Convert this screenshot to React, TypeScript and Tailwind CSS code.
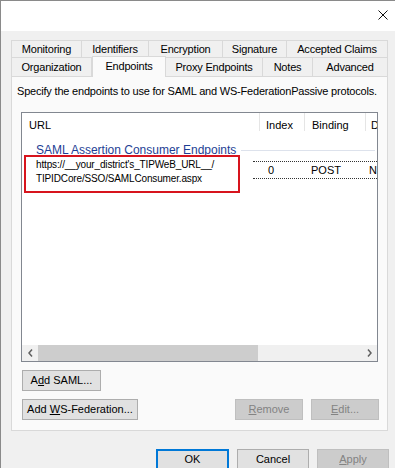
const TOP_TABS = [
  { label: "Monitoring", w: "w-[71px]" },
  { label: "Identifiers", w: "w-[67px]" },
  { label: "Encryption", w: "w-[74px]" },
  { label: "Signature", w: "w-[64px]" },
  { label: "Accepted Claims", w: "w-[101px]" },
];

const BOTTOM_TABS = [
  { label: "Organization", w: "w-[81px]" },
  { label: "Endpoints", w: "w-[74px]", active: true },
  { label: "Proxy Endpoints", w: "w-[97px]" },
  { label: "Notes", w: "w-[50px]" },
  { label: "Advanced", w: "w-[75px]" },
];

function Btn({
  children,
  w,
  disabled,
  primary,
}: {
  children: React.ReactNode;
  w: string;
  disabled?: boolean;
  primary?: boolean;
}) {
  return (
    <div
      className={
        "flex h-[21px] items-center justify-center text-[11px] " +
        w +
        (disabled
          ? " border border-[#bfbfbf] bg-[#cccccc] text-[#838383]"
          : primary
            ? " border-2 border-[#0078d7] bg-[#e1e1e1] text-black"
            : " border border-[#adadad] bg-[#e1e1e1] text-black")
      }
    >
      <span className="whitespace-pre">{children}</span>
    </div>
  );
}

export default function App() {
  return (
    <div className="h-[468px] w-[395px] overflow-hidden border-l border-t border-[#8a8a8a] bg-[#f0f0f0] font-['Liberation_Sans',Arial,sans-serif] text-[11px] text-black">
      {/* title bar */}
      <div className="flex h-[30px] items-center justify-end bg-white pr-[7px]">
        <svg width="10" height="10" viewBox="0 0 10 10" className="mt-[-2px]">
          <path d="M0.5 0.5L9.5 9.5M9.5 0.5L0.5 9.5" stroke="#111" strokeWidth="1" />
        </svg>
      </div>

      {/* tabs */}
      <div className="ml-[10px] mt-[9px] w-[377px]">
        <div className="flex h-[17px]">
          {TOP_TABS.map((t, i) => (
            <div
              key={t.label}
              className={
                "flex items-center justify-center border-r border-t border-[#d9d9d9] pt-px tracking-[-0.2px] " +
                t.w +
                (i === 0 ? " border-l" : "")
              }
            >
              {t.label}
            </div>
          ))}
        </div>
        <div className="flex h-[19px] items-end">
          {BOTTOM_TABS.map((t, i) =>
            t.active ? (
              <div
                key={t.label}
                className={
                  "relative z-10 mb-[-1px] flex h-[21px] items-center justify-center border-l border-r border-t border-[#d9d9d9] bg-[#fafafa] pb-[2px] tracking-[-0.2px] " +
                  t.w
                }
              >
                {t.label}
              </div>
            ) : (
              <div
                key={t.label}
                className={
                  "flex h-[19px] items-center justify-center border-r border-t border-[#d9d9d9] tracking-[-0.2px] " +
                  t.w +
                  (i === 0 ? " border-l" : "")
                }
              >
                {t.label}
              </div>
            )
          )}
        </div>

        {/* page */}
        <div className="flex h-[355px] flex-col border border-[#d9d9d9] bg-[#fafafa]">
          <div className="whitespace-nowrap pl-[5px] pt-[7px] leading-[14px] tracking-[-0.2px]">
            Specify the endpoints to use for SAML and WS-FederationPassive protocols.
          </div>

          {/* list view */}
          <div className="ml-[9px] mt-[14px] flex h-[250px] w-[357px] flex-col border border-[#828790] bg-white">
            <div className="flex h-[18px]">
              <div className="flex h-full w-[237px] items-center pl-[7px] pt-[7px]">URL</div>
              <div className="flex h-full w-[45px] items-center border-l border-[#e5e5e5] pl-[6px] pt-[7px]">Index</div>
              <div className="flex h-full w-[61px] items-center border-l border-[#e5e5e5] pl-[7px] pt-[7px]">Binding</div>
              <div className="flex h-full flex-1 items-center overflow-hidden border-l border-[#e5e5e5] pl-[5px] pt-[7px]">D</div>
            </div>

            <div className="mt-[11px] flex h-[16px] items-center pl-[14px] pr-[2px]">
              <span className="text-[12px] text-[#1e3e94]">SAML Assertion Consumer Endpoints</span>
              <div className="ml-[5px] h-px flex-1 bg-[#dde2ec]" />
            </div>

            <div className="mt-[-3px] flex">
              <div className="w-[231px]">
                <div className="ml-[2px] h-[38px] w-[216px] border-2 border-[#d7141d] pl-[10px] pt-px text-[10px] leading-[14px] tracking-[-0.15px]">
                  https://__your_district's_TIPWeB_URL__/
                  <br />
                  TIPIDCore/SSO/SAMLConsumer.aspx
                </div>
              </div>
              <div className="mt-[6px] flex h-[18px] flex-1 items-center overflow-hidden border-b border-t border-dotted border-[#333]">
                <span className="w-[51px] pl-[15px]">0</span>
                <span className="w-[61px] pl-[7px]">POST</span>
                <span className="pl-[4px]">N</span>
              </div>
            </div>

            <div className="flex-1" />

            {/* horizontal scrollbar */}
            <div className="flex h-[16px] bg-[#f0f0f0]">
              <div className="flex w-[16px] items-center justify-center">
                <svg width="5" height="8" viewBox="0 0 5 8">
                  <path d="M4 0.5L1 4L4 7.5" fill="none" stroke="#606060" strokeWidth="1.5" />
                </svg>
              </div>
              <div className="w-[220px] bg-[#cdcdcd]" />
              <div className="flex-1" />
              <div className="flex w-[16px] items-center justify-center">
                <svg width="5" height="8" viewBox="0 0 5 8">
                  <path d="M1 0.5L4 4L1 7.5" fill="none" stroke="#606060" strokeWidth="1.5" />
                </svg>
              </div>
            </div>
          </div>

          <div className="ml-[10px] mt-[8px]">
            <Btn w="w-[79px]">
              A<u>d</u>d SAML...
            </Btn>
          </div>
          <div className="ml-[10px] mt-[8px] flex w-[357px] gap-[8px]">
            <Btn w="w-[116px]">
              Add <u>W</u>S-Federation...
            </Btn>
            <div className="flex-1" />
            <Btn w="w-[68px]" disabled>
              <u>R</u>emove
            </Btn>
            <Btn w="w-[68px]" disabled>
              <u>E</u>dit...
            </Btn>
          </div>
        </div>
      </div>

      {/* dialog buttons */}
      <div className="mt-[18px] flex justify-end gap-[8px] pr-[6px]">
        <Btn w="w-[73px]" primary>
          OK
        </Btn>
        <Btn w="w-[72px]">Cancel</Btn>
        <Btn w="w-[72px]" disabled>
          <u>A</u>pply
        </Btn>
      </div>
    </div>
  );
}
